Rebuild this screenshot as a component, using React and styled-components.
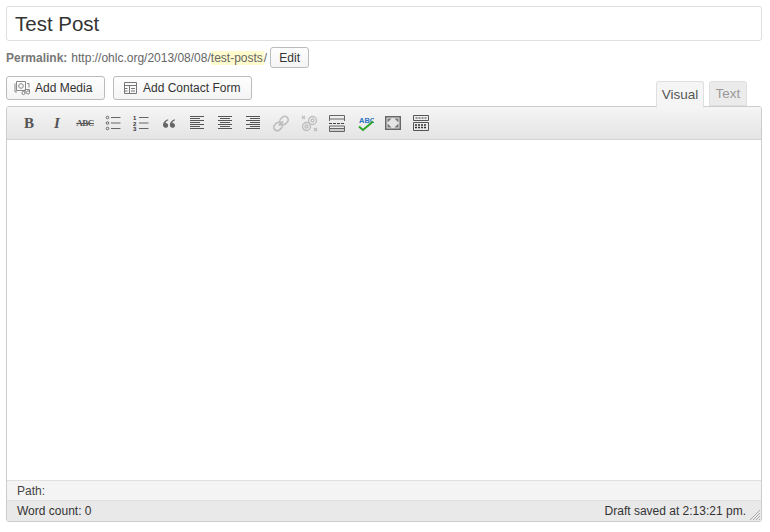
import React from "react";
import styled, { createGlobalStyle } from "styled-components";

const Global = createGlobalStyle`
    html, body {
        margin: 0;
        background: #fff;
        font-family: "Liberation Sans", Arial, sans-serif;
        color: #333;
    }
    * { box-sizing: border-box; }
`;

const Page = styled.div`
    width: 770px;
    height: 532px;
    padding: 6px 8px 0 6px;
    overflow: hidden;
`;

const TitleBox = styled.div`
    height: 35px;
    border: 1px solid #dfdfdf;
    border-radius: 3px;
    padding-left: 8px;
    display: flex;
    align-items: center;
    font-size: 20.5px;
    color: #333;
`;

const PermalinkRow = styled.div`
    display: flex;
    align-items: center;
    height: 21px;
    margin-top: 6px;
    font-size: 12px;
    color: #666;
    white-space: nowrap;
`;

const Label = styled.strong`
    color: #777;
    margin-right: 4px;
`;

const Slug = styled.span`
    background: #fffbcc;
    padding-right: 1px;
`;

const Button = styled.div`
    display: flex;
    align-items: center;
    gap: ${(p) => p.$gap || 0}px;
    height: ${(p) => p.$h || 24}px;
    width: ${(p) => p.$w}px;
    margin-left: ${(p) => p.$ml || 0}px;
    padding-left: ${(p) => p.$pl || 0}px;
    justify-content: ${(p) => (p.$pl ? "flex-start" : "center")};
    border: 1px solid #bbb;
    border-radius: 3px;
    background: linear-gradient(#fefefe, #f4f4f4);
    font-size: 12px;
    color: #333;
`;

const MediaRow = styled.div`
    display: flex;
    align-items: flex-start;
    height: 31px;
    margin-top: 8px;
    position: relative;
    z-index: 1;
`;

const Tabs = styled.div`
    display: flex;
    align-items: flex-start;
    gap: 5px;
    margin-left: auto;
    margin-right: 15px;
    margin-top: 5px;
`;

const Tab = styled.div`
    display: flex;
    align-items: center;
    justify-content: center;
    width: ${(p) => p.$w}px;
    height: ${(p) => (p.$active ? 27 : 25)}px;
    border: 1px solid #dfdfdf;
    border-bottom-color: ${(p) => (p.$active ? "#f5f5f5" : "#dfdfdf")};
    border-radius: 3px 3px 0 0;
    background: ${(p) => (p.$active ? "#f5f5f5" : "#ebebeb")};
    color: ${(p) => (p.$active ? "#555" : "#999")};
    font-size: 13.5px;
    padding-bottom: 1px;
`;

const Editor = styled.div`
    height: 416px;
    margin-top: -1px;
    border: 1px solid #ccc;
    border-radius: 3px;
    display: flex;
    flex-direction: column;
    overflow: hidden;
`;

const Toolbar = styled.div`
    display: flex;
    align-items: center;
    height: 33px;
    flex: none;
    padding-left: 8px;
    background: linear-gradient(#f5f5f5, #e4e4e4);
    border-bottom: 1px solid #d2d2d2;
`;

const Tool = styled.div`
    width: 28px;
    height: 24px;
    flex: none;
    display: flex;
    align-items: center;
    justify-content: center;
    opacity: ${(p) => (p.$off ? 0.3 : 1)};
`;

const Glyph = styled.span`
    font-family: "Liberation Serif", serif;
    font-size: ${(p) => p.$size}px;
    font-weight: 700;
    font-style: ${(p) => (p.$italic ? "italic" : "normal")};
    text-decoration: ${(p) => (p.$strike ? "line-through" : "none")};
    letter-spacing: ${(p) => p.$track || 0}px;
    color: #555;
`;

const Content = styled.div`
    flex: 1;
    background: #fff;
`;

const PathBar = styled.div`
    height: 21px;
    flex: none;
    display: flex;
    align-items: center;
    padding-left: 10px;
    background: #f4f4f4;
    border-top: 1px solid #e0e0e0;
    border-bottom: 1px solid #dedede;
    font-size: 12px;
    color: #444;
`;

const StatusBar = styled.div`
    height: 20px;
    flex: none;
    display: flex;
    align-items: center;
    justify-content: space-between;
    padding: 0 15px 0 10px;
    background: #e9e9e9;
    font-size: 12px;
    color: #333;
    position: relative;
`;

const Grip = styled.svg`
    position: absolute;
    right: 0;
    bottom: 0;
`;

const Lines = ({ rows }) => (
    <svg width="16" height="14" viewBox="0 0 16 14" stroke="#555" strokeWidth="1">
        {rows.map(([x1, x2], i) => (
            <line key={i} x1={x1} x2={x2} y1={i * 2 + 0.5} y2={i * 2 + 0.5} />
        ))}
    </svg>
);

const alignLeft = [[1, 15], [1, 11], [1, 15], [1, 11], [1, 15], [1, 11], [1, 15]];
const alignCenter = [[1, 15], [3, 13], [1, 15], [3, 13], [1, 15], [3, 13], [1, 15]];
const alignRight = [[1, 15], [5, 15], [1, 15], [5, 15], [1, 15], [5, 15], [1, 15]];

const MediaIcon = () => (
    <svg width="17" height="16" viewBox="0 0 17 16" fill="none" stroke="#888" strokeWidth="1">
        <path d="M2.5 1.5h9v9h-9z" />
        <path d="M1 3.500v8.500h2M13 3.500h2v4" />
        <circle cx="7" cy="6" r="2.300" />
        <circle cx="9.500" cy="13" r="1.600" />
        <circle cx="14" cy="12.500" r="1.600" />
        <path d="M11 13V9.500h4.500v3" />
    </svg>
);

const FormIcon = () => (
    <svg width="13" height="12" viewBox="0 0 13 12" fill="none" stroke="#777" strokeWidth="1">
        <path d="M.5.500h12v11H.5z" />
        <path d="M.5 3.500h12M5.500 3.500v8M.5 6.500h3M.5 9h3M7 6.500h4M7 9h4" />
    </svg>
);

const ListIcon = () => (
    <svg width="16" height="16" viewBox="0 0 16 16" fill="none" stroke="#666">
        <circle cx="2.500" cy="2.500" r="1.300" />
        <circle cx="2.500" cy="8" r="1.300" />
        <circle cx="2.500" cy="13.500" r="1.300" />
        <path d="M6 2.500h9.500M6 8h9.500M6 13.500h9.500" />
    </svg>
);

const Num = styled.text`
    font-size: 6px;
    font-weight: 700;
    font-family: "Liberation Sans", sans-serif;
    fill: #333;
    stroke: none;
`;

const OrderedIcon = () => (
    <svg width="16" height="16" viewBox="0 0 16 16" fill="none" stroke="#666">
        <Num x="0" y="5">1</Num>
        <Num x="0" y="10.500">2</Num>
        <Num x="0" y="16">3</Num>
        <path d="M6 2.500h9.500M6 8h9.500M6 13.500h9.500" />
    </svg>
);

const QuoteIcon = () => (
    <svg width="12" height="9" viewBox="0 0 14 10" fill="#666">
        <path d="M6 0C2.500 1 0 3.500 0 6.500 0 8.500 1.200 10 3 10s3-1.200 3-2.800C6 5.600 4.800 4.500 3.400 4.500c-.3 0-.5 0-.7.100C3.100 3.200 4.500 2 6 1.200z" />
        <path d="M14 0c-3.500 1-6 3.500-6 6.500C8 8.500 9.200 10 11 10s3-1.200 3-2.800c0-1.600-1.200-2.700-2.600-2.700-.3 0-.5 0-.7.100.4-1.400 1.800-2.600 3.300-3.400z" />
    </svg>
);

const LinkIcon = () => (
    <svg width="16" height="17" viewBox="0 0 16 17" fill="none" stroke="#555" strokeWidth="1.600">
        <rect x="7.500" y="1" width="7" height="9" rx="3.500" transform="rotate(45 11 5.500)" />
        <rect x="1.500" y="7" width="7" height="9" rx="3.500" transform="rotate(45 5 11.500)" />
        <path d="M6 10.500l4-4" strokeWidth="2" />
    </svg>
);

const UnlinkIcon = () => (
    <svg width="17" height="17" viewBox="0 0 17 17" fill="none" stroke="#555" strokeWidth="1.300">
        <circle cx="11.500" cy="5.500" r="4" />
        <circle cx="11.500" cy="5.500" r="1.500" />
        <circle cx="5.500" cy="11.500" r="4" />
        <circle cx="5.500" cy="11.500" r="1.500" />
        <path d="M1 1l3 3M4 1L1 4M13 13l3 3M16 13l-3 3" />
    </svg>
);

const MoreIcon = () => (
    <svg width="16" height="17" viewBox="0 0 16 17" fill="none" stroke="#666">
        <path d="M.5 6V.5h15V6M.5 4h15" />
        <path d="M0 8.500h16" strokeDasharray="3 1" stroke="#444" />
        <path d="M1 15h14" stroke="#ccc" strokeWidth="2" />
        <path d="M.5 16.500V11h15v5.500zM.5 13.500h15" />
    </svg>
);

const SpellText = styled.text`
    font-size: 7.5px;
    font-weight: 700;
    font-family: "Liberation Sans", sans-serif;
    fill: #2a74c4;
`;

const SpellIcon = () => (
    <svg width="18" height="17" viewBox="0 0 18 17">
        <SpellText x="3" y="7.500">ABC</SpellText>
        <path d="M3 11.500l4 3.500 10-8.500" fill="none" stroke="#2aa52a" strokeWidth="2" />
    </svg>
);

const FullscreenIcon = () => (
    <svg width="16" height="14" viewBox="0 0 16 14">
        <path d="M.75.750h14.500v12.500H.75z" fill="#e4e4e4" stroke="#666" strokeWidth="1.500" />
        <path d="M2.500 2.500h4l-4 4zM13.500 2.500h-4l4 4zM2.500 11.500h4l-4-4zM13.500 11.500h-4l4-4z" fill="#777" />
    </svg>
);

const KitchenIcon = () => (
    <svg width="16" height="16" viewBox="0 0 16 16" fill="none" stroke="#555">
        <path d="M.5.500h15v5H.5zM.5 7.500h15v8H.5z" />
        <path d="M2.500 3h11" strokeDasharray="2 1" strokeWidth="1.500" stroke="#777" />
        <path d="M2 10h12M2 12.500h12" strokeDasharray="2 1" strokeWidth="1.500" stroke="#333" />
    </svg>
);

const tools = [
    <Glyph $size={15}>B</Glyph>,
    <Glyph $size={15} $italic>I</Glyph>,
    <Glyph $size={9} $strike $track={-0.5}>ABC</Glyph>,
    <ListIcon />,
    <OrderedIcon />,
    <QuoteIcon />,
    <Lines rows={alignLeft} />,
    <Lines rows={alignCenter} />,
    <Lines rows={alignRight} />,
    <LinkIcon />,
    <UnlinkIcon />,
    <MoreIcon />,
    <SpellIcon />,
    <FullscreenIcon />,
    <KitchenIcon />,
];

export default function App() {
    return (
        <Page>
            <Global />
            <TitleBox>Test Post</TitleBox>
            <PermalinkRow>
                <Label>Permalink:</Label>
                http://ohlc.org/2013/08/08/<Slug>test-posts</Slug>/
                <Button $w={39} $h={21} $ml={3}>Edit</Button>
            </PermalinkRow>
            <MediaRow>
                <Button $w={99} $pl={7} $gap={4}><MediaIcon />Add Media</Button>
                <Button $w={139} $ml={8} $pl={10} $gap={6}><FormIcon />Add Contact Form</Button>
                <Tabs>
                    <Tab $w={48} $active>Visual</Tab>
                    <Tab $w={38}>Text</Tab>
                </Tabs>
            </MediaRow>
            <Editor>
                <Toolbar>
                    {tools.map((icon, i) => (
                        <Tool key={i} $off={i === 9 || i === 10}>{icon}</Tool>
                    ))}
                </Toolbar>
                <Content />
                <PathBar>Path:</PathBar>
                <StatusBar>
                    <span>Word count: 0</span>
                    <span>Draft saved at 2:13:21 pm.</span>
                    <Grip width="12" height="12" viewBox="0 0 12 12" stroke="#aaa">
                        <path d="M11 1L1 11M11 4l-7 7M11 7l-4 4M11 10l-1 1" />
                    </Grip>
                </StatusBar>
            </Editor>
        </Page>
    );
}
